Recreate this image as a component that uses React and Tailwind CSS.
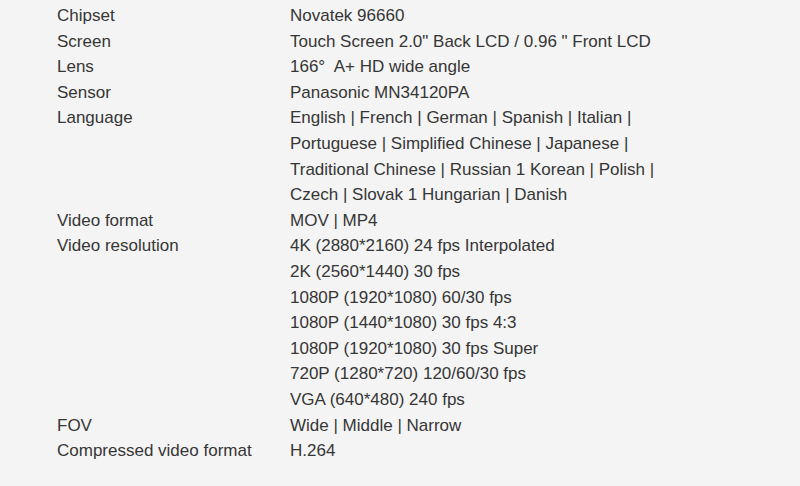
import React from "react";

const specs = [
  { label: "Chipset", lines: ["Novatek 96660"] },
  { label: "Screen", lines: ['Touch Screen 2.0" Back LCD / 0.96 " Front LCD'] },
  { label: "Lens", lines: ["166°  A+ HD wide angle"] },
  { label: "Sensor", lines: ["Panasonic MN34120PA"] },
  {
    label: "Language",
    lines: [
      "English | French | German | Spanish | Italian |",
      "Portuguese | Simplified Chinese | Japanese |",
      "Traditional Chinese | Russian 1 Korean | Polish |",
      "Czech | Slovak 1 Hungarian | Danish",
    ],
  },
  { label: "Video format", lines: ["MOV | MP4"] },
  {
    label: "Video resolution",
    lines: [
      "4K (2880*2160) 24 fps Interpolated",
      "2K (2560*1440) 30 fps",
      "1080P (1920*1080) 60/30 fps",
      "1080P (1440*1080) 30 fps 4:3",
      "1080P (1920*1080) 30 fps Super",
      "720P (1280*720) 120/60/30 fps",
      "VGA (640*480) 240 fps",
    ],
  },
  { label: "FOV", lines: ["Wide | Middle | Narrow"] },
  { label: "Compressed video format", lines: ["H.264"] },
];

export default function App() {
  return (
    <div
      className="w-[800px] h-[486px] overflow-hidden bg-[#f4f4f4] text-[#363636] text-[17px] leading-[25.6px] pt-[3px] pl-[57px]"
      style={{ fontFamily: '"Liberation Sans", Arial, sans-serif' }}
    >
      {specs.map((row) => (
        <div key={row.label} className="grid grid-cols-[233px_1fr]">
          <div className="whitespace-nowrap">{row.label}</div>
          <div>
            {row.lines.map((line, i) => (
              <div key={i} className="whitespace-pre">
                {line}
              </div>
            ))}
          </div>
        </div>
      ))}
    </div>
  );
}
